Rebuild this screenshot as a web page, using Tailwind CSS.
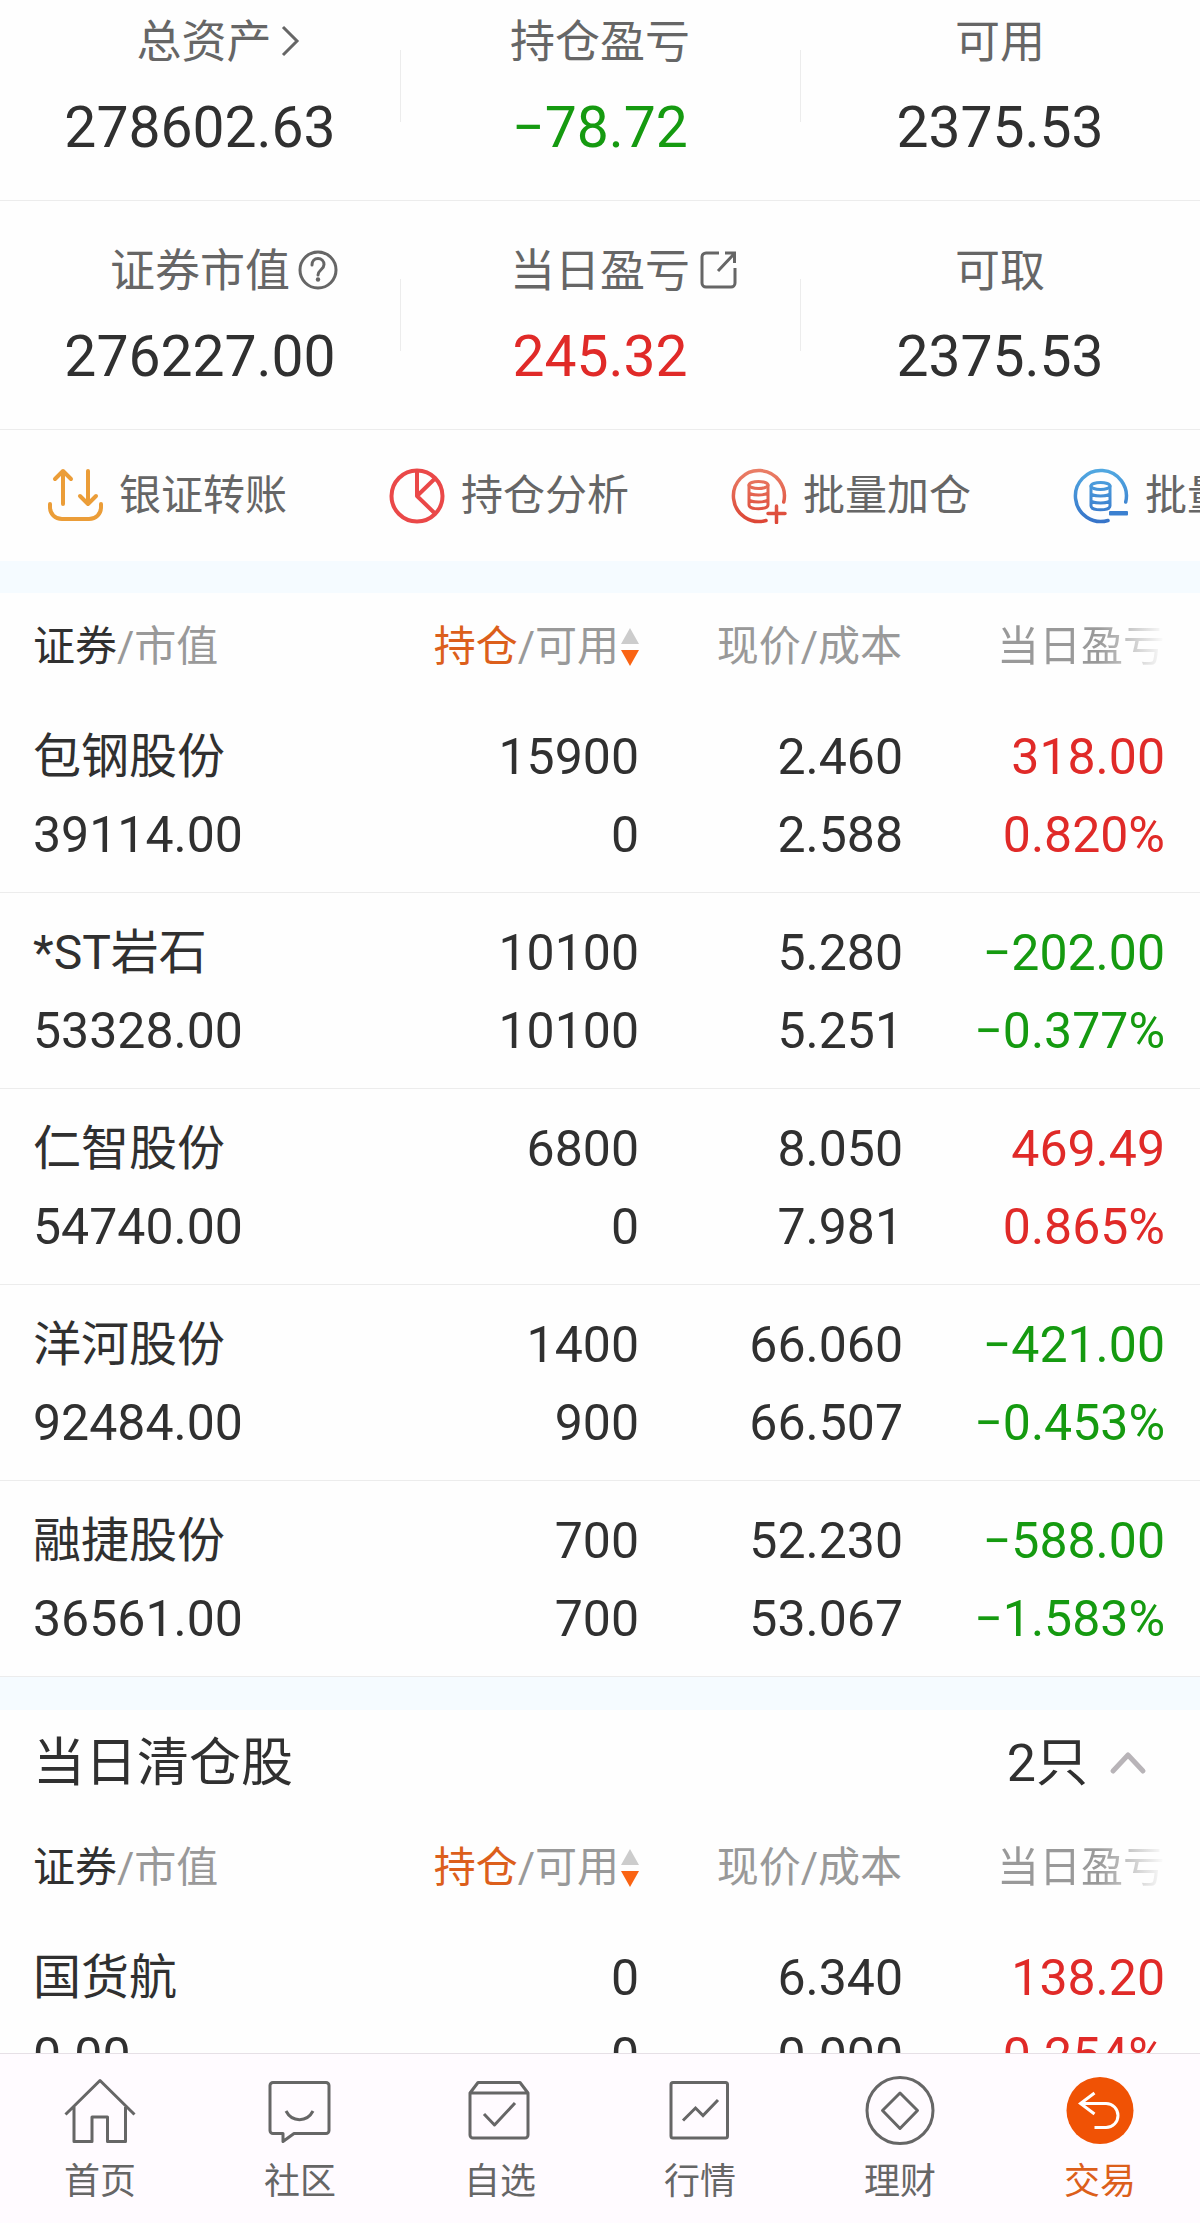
<!DOCTYPE html>
<html lang="zh-CN">
<head>
  <meta charset="UTF-8" />
  <meta name="viewport" content="width=device-width, initial-scale=1" />
  <title>交易 | 我的持仓</title>
  <script src="https://cdn.jsdelivr.net/npm/@tailwindcss/browser@4"></script>
  <style>
    body {
      font-family: Roboto, "Noto Sans CJK SC", sans-serif;
    }
  </style>
</head>
<body class="h-screen flex flex-col bg-[#fefefe] text-[#303030]">

  <main class="flex-1 min-h-0 overflow-y-auto [scrollbar-width:none]">

    <!-- 资产概览 -->
    <section class="text-center">
      <div class="grid grid-cols-3 items-end border-b border-[#ececec] pt-[13px] pb-9">
        <div>
          <a href="#" class="relative inline-block pl-2 text-[45px] leading-[60px] text-[#666]">总资产
            <svg class="absolute left-full top-2 ml-1 h-10 w-6" viewBox="0 0 24 40" fill="none" stroke="#666" stroke-width="3"><path d="M7 6l14 14L7 34" /></svg>
          </a>
          <p class="mt-[19px] text-[57px] leading-[72px]">278602.63</p>
        </div>
        <div class="relative">
          <span class="absolute left-0 top-[37px] h-[72px] w-px bg-[#ececec]"></span>
          <span class="inline-block text-[45px] leading-[60px] text-[#666]">持仓盈亏</span>
          <p class="mt-[19px] text-[57px] leading-[72px] text-[#159a10]">−78.72</p>
        </div>
        <div class="relative">
          <span class="absolute left-0 top-[37px] h-[72px] w-px bg-[#ececec]"></span>
          <span class="inline-block text-[45px] leading-[60px] text-[#666]">可用</span>
          <p class="mt-[19px] text-[57px] leading-[72px]">2375.53</p>
        </div>
      </div>

      <div class="grid grid-cols-3 items-end border-b border-[#ececec] pt-[41px] pb-9">
        <div>
          <a href="#" class="relative inline-block text-[45px] leading-[60px] text-[#666]">证券市值
            <svg class="absolute left-full top-2 ml-2 size-10" viewBox="0 0 40 40" fill="none" stroke="#666" stroke-width="3">
              <circle cx="20" cy="20" r="18" />
              <path d="M14 15c0-4 2.500-6.500 6-6.500s6 2.500 6 6c0 5-6 5.500-6 10.500" stroke-linecap="round" />
              <circle cx="20" cy="29.500" r="2.200" fill="#666" stroke="none" />
            </svg>
          </a>
          <p class="mt-[19px] text-[57px] leading-[72px]">276227.00</p>
        </div>
        <div class="relative">
          <span class="absolute left-0 top-[37px] h-[72px] w-px bg-[#ececec]"></span>
          <a href="#" class="relative inline-block text-[45px] leading-[60px] text-[#666]">当日盈亏
            <svg class="absolute left-full top-2 ml-2 size-10" viewBox="0 0 40 40" fill="none" stroke="#666" stroke-width="3">
              <path d="M21 3H8a4 4 0 0 0-4 4v26a4 4 0 0 0 4 4h25a4 4 0 0 0 4-4V18" />
              <path d="M20 21L36 4M27 3h9.500v10" />
            </svg>
          </a>
          <p class="mt-[19px] text-[57px] leading-[72px] text-[#e02a28]">245.32</p>
        </div>
        <div class="relative">
          <span class="absolute left-0 top-[37px] h-[72px] w-px bg-[#ececec]"></span>
          <span class="inline-block text-[45px] leading-[60px] text-[#666]">可取</span>
          <p class="mt-[19px] text-[57px] leading-[72px]">2375.53</p>
        </div>
      </div>
    </section>

    <!-- 快捷功能 -->
    <div class="flex h-[131px] items-center gap-[102px] overflow-hidden whitespace-nowrap pl-[47px] text-[42px] text-[#666]">
      <a href="#" class="flex shrink-0 items-center gap-4">
        <svg class="size-14" viewBox="0 0 56 56" fill="none" stroke="#eb9d38" stroke-width="4" stroke-linecap="round" stroke-linejoin="round">
          <path d="M16 36V3M8 11l8-8 8 8M41 3v33M33 28l8 8 8-8" />
          <path d="M3 36v3c0 7 5 12 12 12h27c7 0 12-5 12-12v-3" />
        </svg>
        银证转账
      </a>
      <a href="#" class="flex shrink-0 items-center gap-4">
        <svg class="size-14" viewBox="0 0 56 56" fill="none" stroke="#ea4848" stroke-width="4">
          <circle cx="28" cy="28" r="25.500" />
          <path d="M28 3v25l18 17.500M28 28l18-17.500" stroke-linejoin="round" />
        </svg>
        持仓分析
      </a>
      <a href="#" class="flex shrink-0 items-center gap-4">
        <svg class="size-14" viewBox="0 0 56 56" fill="none" stroke="url(#red)" stroke-width="3" stroke-linecap="round">
          <defs>
            <linearGradient id="red" gradientUnits="userSpaceOnUse" x1="0" y1="0" x2="0" y2="56"><stop stop-color="#ea8068" /><stop offset="1" stop-color="#dc4434" /></linearGradient>
          </defs>
          <path d="M52.700 34A25.500 25.500 0 1 0 35 52.500" stroke-width="3.500" />
          <ellipse cx="27.500" cy="17" rx="9.500" ry="3.500" />
          <path d="M18 17v20c0 5 19 5 19 0V17M18 24c0 4 19 4 19 0M18 31c0 4 19 4 19 0" />
          <path d="M37 45.500h17M45.500 38v16.500" stroke-width="3.500" />
        </svg>
        批量加仓
      </a>
      <a href="#" class="flex shrink-0 items-center gap-4">
        <svg class="size-14" viewBox="0 0 56 56" fill="none" stroke="url(#blue)" stroke-width="3" stroke-linecap="round">
          <defs>
            <linearGradient id="blue" gradientUnits="userSpaceOnUse" x1="0" y1="0" x2="0" y2="56"><stop stop-color="#52aae2" /><stop offset="1" stop-color="#3672c8" /></linearGradient>
          </defs>
          <path d="M52.700 34A25.500 25.500 0 1 0 35 52.500" stroke-width="3.500" />
          <ellipse cx="27.500" cy="18" rx="9.500" ry="3.500" />
          <path d="M18 18v20c0 5 19 5 19 0V18M18 25c0 4 19 4 19 0M18 32c0 4 19 4 19 0" />
          <rect x="36" y="43" width="19" height="4.500" rx="1" fill="#3b80d0" stroke="none" />
        </svg>
        批量减仓
      </a>
    </div>

    <div class="h-8 bg-[#f5fbff]"></div>

    <!-- 当前持仓 -->
    <table class="w-full table-fixed border-separate border-spacing-0">
      <thead></thead>
      <tbody id="holdings"></tbody>
    </table>

    <div class="h-[33px] bg-[#f5fbff]"></div>

    <!-- 当日清仓 -->
    <div class="flex h-[104px] items-center justify-between pt-1 pl-[33px] pr-[52px] text-[52px]">
      <h2>当日清仓股</h2>
      <button type="button" class="flex items-center gap-5">2只
        <svg class="size-10" viewBox="0 0 40 40" fill="none" stroke="#b8b4b8" stroke-width="5" stroke-linecap="round" stroke-linejoin="round"><path d="M5 27l15-16 15 16" /></svg>
      </button>
    </div>
    <table class="w-full table-fixed border-separate border-spacing-0">
      <thead></thead>
      <tbody id="cleared"></tbody>
    </table>
  </main>

  <!-- 底部导航 -->
  <nav class="grid h-[170px] shrink-0 grid-cols-6 border-t border-[#e6e0e6] bg-[#fffbff] pt-[21px] text-[36px] leading-[48px] text-[#666]">
    <a href="#" class="flex flex-col items-center gap-[11px]">
      <svg class="size-[72px]" viewBox="0 0 72 72" fill="none" stroke="#666" stroke-width="3" stroke-linejoin="round">
        <path d="M1.500 39.500L36 5.500l34.500 34M10 32v34.500h18V42h15.500v24.500h18V32" />
      </svg>
      首页
    </a>
    <a href="#" class="flex flex-col items-center gap-[11px]">
      <svg class="size-[72px]" viewBox="0 0 72 72" fill="none" stroke="#666" stroke-width="3" stroke-linejoin="round">
        <path d="M9 7.500h53a3 3 0 0 1 3 3v45a3 3 0 0 1-3 3H30l-11 8v-8H9a3 3 0 0 1-3-3v-45a3 3 0 0 1 3-3z" />
        <path d="M22 36c6 11.500 21 11.500 27 0" />
      </svg>
      社区
    </a>
    <a href="#" class="flex flex-col items-center gap-[11px]">
      <svg class="size-[72px]" viewBox="0 0 72 72" fill="none" stroke="#666" stroke-width="3" stroke-linejoin="round">
        <path d="M6 18l8-10.500h42L64 18v42a3 3 0 0 1-3 3H9a3 3 0 0 1-3-3zM6 18h58" />
        <path d="M20 39l10.500 11L51 28" />
      </svg>
      自选
    </a>
    <a href="#" class="flex flex-col items-center gap-[11px]">
      <svg class="size-[72px]" viewBox="0 0 72 72" fill="none" stroke="#666" stroke-width="3">
        <rect x="7" y="7.500" width="56.500" height="55.500" rx="2" />
        <path d="M19 45.500L31.500 33l7.500 7.500L54 25" />
      </svg>
      行情
    </a>
    <a href="#" class="flex flex-col items-center gap-[11px]">
      <svg class="size-[72px]" viewBox="0 0 72 72" fill="none" stroke="#666" stroke-width="3" stroke-linejoin="round">
        <circle cx="36" cy="35.500" r="33" />
        <path d="M36 18l17.500 17.500L36 53.500 18.500 35.500z" />
      </svg>
      理财
    </a>
    <a href="#" class="flex flex-col items-center gap-[11px] text-[#dc5f1b]">
      <svg class="size-[72px]" viewBox="0 0 72 72" fill="none" stroke="#fff" stroke-width="3">
        <circle cx="36" cy="35.500" r="33.500" fill="#f05205" stroke="none" />
        <path d="M30.500 18L16.500 28.500l14 10.500M16.500 28.500H42a12 12 0 0 1 0 24H30.500" />
      </svg>
      交易
    </a>
  </nav>

  <script>
    const holdings = [
      { name: '包钢股份', value: '39114.00', qty: '15900', avail: '0', price: '2.460', cost: '2.588', profit: '318.00', rate: '0.820%' },
      { name: '*ST岩石', value: '53328.00', qty: '10100', avail: '10100', price: '5.280', cost: '5.251', profit: '−202.00', rate: '−0.377%' },
      { name: '仁智股份', value: '54740.00', qty: '6800', avail: '0', price: '8.050', cost: '7.981', profit: '469.49', rate: '0.865%' },
      { name: '洋河股份', value: '92484.00', qty: '1400', avail: '900', price: '66.060', cost: '66.507', profit: '−421.00', rate: '−0.453%' },
      { name: '融捷股份', value: '36561.00', qty: '700', avail: '700', price: '52.230', cost: '53.067', profit: '−588.00', rate: '−1.583%' }
    ];

    const cleared = [
      { name: '国货航', value: '0.00', qty: '0', avail: '0', price: '6.340', cost: '0.000', profit: '138.20', rate: '0.254%' }
    ];

    // 两个表格共用同一个表头
    document.querySelectorAll('thead').forEach(thead => {
      thead.innerHTML = `
        <tr class="h-[104px] text-right text-[42px] text-[#999]">
          <th class="w-1/3 pt-[3px] pl-[33px] text-left font-normal"><span class="text-[#303030]">证券</span>/市值</th>
          <th class="w-1/5 pt-[3px] pr-px whitespace-nowrap font-normal">
            <button type="button" class="inline-flex items-center gap-[2px]">
              <span><span class="text-[#dc5f1b]">持仓</span>/可用</span>
              <svg class="h-10 w-[18px]" viewBox="0 0 18 40"><path d="M0 17L9 1l9 16z" fill="#ccc" /><path d="M0 23l9 16 9-16z" fill="#fa6414" /></svg>
            </button>
          </th>
          <th class="w-[22%] pt-[3px] pr-[2px] font-normal">现价/成本</th>
          <th class="pt-[3px] pr-[35px] font-normal"><span class="bg-linear-to-r from-[#999] from-60% to-[#fefefe] bg-clip-text text-transparent">当日盈亏</span></th>
        </tr>
      `;
    });

    function renderRows(id, list) {
      document.getElementById(id).innerHTML = list.map(item => {
        const color = item.profit.startsWith('−') ? 'text-[#159a10]' : 'text-[#e02a28]';
        return `
          <tr class="text-right text-[50px] leading-[78px]">
            <td class="border-b border-[#ececec] pt-[21px] pb-[18px] pl-[33px] text-left"><p class="text-[48px]">${item.name}</p><p>${item.value}</p></td>
            <td class="border-b border-[#ececec] pt-[21px] pb-[18px] pr-px"><p>${item.qty}</p><p>${item.avail}</p></td>
            <td class="border-b border-[#ececec] pt-[21px] pb-[18px] pr-px"><p>${item.price}</p><p>${item.cost}</p></td>
            <td class="border-b border-[#ececec] pt-[21px] pb-[18px] pr-[35px] ${color}"><p>${item.profit}</p><p>${item.rate}</p></td>
          </tr>
        `;
      }).join('');
    }

    renderRows('holdings', holdings);
    renderRows('cleared', cleared);
  </script>

</body>
</html>
